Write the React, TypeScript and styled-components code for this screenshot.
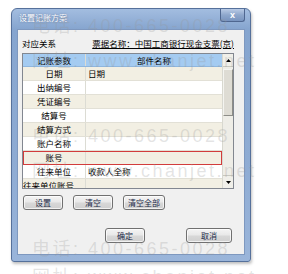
import React from "react";
import styled, { createGlobalStyle } from "styled-components";

const GlobalStyle = createGlobalStyle`
  html, body {
    margin: 0;
    padding: 0;
    background: #ffffff;
  }
  body {
    font-family: "Noto Sans CJK SC", "Liberation Sans", sans-serif;
    color: #000;
  }
`;

const Page = styled.div`
  position: relative;
  width: 288px;
  height: 274px;
  overflow: hidden;
  box-sizing: border-box;
  padding: 8px 0 0 11px;
`;

const Dialog = styled.div`
  width: 240px;
  height: 254px;
  box-sizing: border-box;
  display: flex;
  flex-direction: column;
  border: 1px solid #56719b;
  border-radius: 6px 6px 3px 3px;
  background: linear-gradient(180deg, #a3bde0 0%, #86a5cf 8%, #8eabd3 60%, #9ab5da 100%);
  padding: 0 5px 6px 5px;
  box-shadow: 1px 2px 3px rgba(0, 0, 0, 0.25);
`;

const TitleBar = styled.div`
  height: 20px;
  display: flex;
  justify-content: space-between;
  align-items: flex-start;
`;

const Title = styled.span`
  color: #ffffff;
  font-size: 8px;
  line-height: 10px;
  padding: 4px 0 0 2px;
  text-shadow: 0 0 2px rgba(40, 60, 100, 0.6);
`;

const CloseButton = styled.div`
  width: 25px;
  height: 13px;
  box-sizing: border-box;
  border: 1px solid #4f6790;
  border-top: none;
  border-radius: 0 0 3px 3px;
  background: linear-gradient(180deg, #b9cbe6 0%, #8ea7cc 50%, #7894bf 100%);
  display: flex;
  align-items: center;
  justify-content: center;
  color: #ffffff;
  font-family: "Liberation Sans", sans-serif;
  font-weight: bold;
  font-size: 9px;
  line-height: 9px;
`;

const Panel = styled.div`
  flex: 1;
  box-sizing: border-box;
  background: #f0f0f0;
  border: 1px solid #7e98bf;
  display: flex;
  flex-direction: column;
  padding: 8px 10px 0 4px;
`;

const InfoRow = styled.div`
  display: flex;
  justify-content: space-between;
  font-size: 8.5px;
  line-height: 11px;
  height: 12px;
`;

const InfoText = styled.span<{ $underline?: boolean }>`
  text-decoration: ${(p) => (p.$underline ? "underline" : "none")};
  text-underline-offset: 1px;
`;

const Table = styled.div`
  margin-top: 3px;
  width: 212px;
  height: 136px;
  box-sizing: border-box;
  border: 1px solid #828790;
  display: flex;
  background: #ffffff;
`;

const Grid = styled.div`
  flex: 1;
  overflow: hidden;
  display: flex;
  flex-direction: column;
`;

const Row = styled.div<{ $tone: "head" | "odd" | "even"; $marked?: boolean }>`
  flex: none;
  display: grid;
  grid-template-columns: 63px 1fr;
  height: ${(p) => (p.$tone === "head" ? "13px" : "14px")};
  box-sizing: border-box;
  font-size: 8.5px;
  line-height: 12px;
  background: ${(p) =>
    p.$tone === "head" ? "#a4cbf1" : p.$tone === "odd" ? "#f2efe3" : "#ffffff"};
  border-bottom: 1px solid ${(p) => (p.$tone === "head" ? "#8fb6de" : "#e2e0d6")};
  outline: ${(p) => (p.$marked ? "1px solid #d23c3c" : "none")};
  outline-offset: -1px;
`;

const Cell = styled.div<{ $align: "center" | "left" | "start" }>`
  text-align: ${(p) => (p.$align === "center" ? "center" : "left")};
  padding-left: ${(p) => (p.$align === "left" ? "2px" : "0")};
  white-space: nowrap;
  overflow: visible;
  border-right: 1px solid #dcdcd4;
  &:last-child {
    border-right: none;
  }
`;

const Scrollbar = styled.div`
  width: 10px;
  display: flex;
  flex-direction: column;
  background: #eeede7;
  border-left: 1px solid #d8d8d0;
`;

const ArrowButton = styled.div`
  height: 12px;
  display: flex;
  align-items: center;
  justify-content: center;
  background: #f0efe9;
  border-bottom: 1px solid #c8c8c0;
  &:last-child {
    border-bottom: none;
    border-top: 1px solid #c8c8c0;
    margin-top: auto;
  }
`;

const Thumb = styled.div`
  margin-top: 2px;
  height: 47px;
  box-sizing: border-box;
  background: #dedcd4;
  border: 1px solid #8d8d88;
  border-left-color: #f4f4f0;
  border-top-color: #f4f4f0;
`;

const ButtonRow = styled.div<{ $end?: boolean }>`
  display: flex;
  justify-content: ${(p) => (p.$end ? "flex-end" : "flex-start")};
  gap: ${(p) => (p.$end ? "41px" : "10px")};
  margin-top: ${(p) => (p.$end ? "18px" : "6px")};
  padding-left: ${(p) => (p.$end ? "0" : "1px")};
  padding-right: ${(p) => (p.$end ? "2px" : "0")};
`;

const Button = styled.div<{ $w: number }>`
  width: ${(p) => p.$w}px;
  height: 15px;
  box-sizing: border-box;
  border: 1px solid #707070;
  border-radius: 3px;
  background: linear-gradient(180deg, #f4f4f4 0%, #e8e8e8 48%, #d8d8d8 52%, #cfcfcf 100%);
  box-shadow: inset 0 0 0 1px rgba(255, 255, 255, 0.7);
  display: flex;
  align-items: center;
  justify-content: center;
  font-size: 8px;
  line-height: 10px;
  color: #1d2a48;
`;

const Watermarks = styled.div`
  position: absolute;
  inset: 0;
  pointer-events: none;
`;

const Mark = styled.div`
  position: absolute;
  left: 32px;
  white-space: nowrap;
  font-family: "Liberation Sans", "Noto Sans CJK SC", sans-serif;
  font-size: 18px;
  line-height: 18px;
  letter-spacing: 2.5px;
  color: rgba(150, 150, 150, 0.26);
`;

const rows: { param: string; part: string; marked?: boolean; wide?: boolean }[] = [
  { param: "日期", part: "日期" },
  { param: "出纳编号", part: "" },
  { param: "凭证编号", part: "" },
  { param: "结算号", part: "" },
  { param: "结算方式", part: "" },
  { param: "账户名称", part: "" },
  { param: "账号", part: "", marked: true },
  { param: "往来单位", part: "收款人全称" },
  { param: "往来单位账号", part: "", wide: true },
];

const marks: { text: string; top: number }[] = [
  { text: "电话: 400-665-0028", top: 17 },
  { text: "网址: www.chanjet.net", top: 52 },
  { text: "电话: 400-665-0028", top: 127 },
  { text: "网址: www.chanjet.net", top: 162 },
  { text: "电话: 400-665-0028", top: 240 },
  { text: "网址: www.chanjet.net", top: 268 },
];

const UpArrow = () => (
  <svg width="5" height="3" viewBox="0 0 5 3">
    <path d="M0 3 L2.5 0 L5 3 Z" fill="#000" />
  </svg>
);

const DownArrow = () => (
  <svg width="5" height="3" viewBox="0 0 5 3">
    <path d="M0 0 L2.5 3 L5 0 Z" fill="#000" />
  </svg>
);

export default function App() {
  return (
    <>
      <GlobalStyle />
      <Page>
        <Dialog>
          <TitleBar>
            <Title>设置记账方案</Title>
            <CloseButton>x</CloseButton>
          </TitleBar>
          <Panel>
            <InfoRow>
              <InfoText>对应关系</InfoText>
              <InfoText $underline>票据名称：中国工商银行现金支票(京)</InfoText>
            </InfoRow>
            <Table>
              <Grid>
                <Row $tone="head">
                  <Cell $align="center">记账参数</Cell>
                  <Cell $align="center">部件名称</Cell>
                </Row>
                {rows.map((r, i) => (
                  <Row key={r.param} $tone={i % 2 === 0 ? "odd" : "even"} $marked={r.marked}>
                    <Cell $align={r.wide ? "start" : "center"}>{r.param}</Cell>
                    <Cell $align="left">{r.part}</Cell>
                  </Row>
                ))}
              </Grid>
              <Scrollbar>
                <ArrowButton>
                  <UpArrow />
                </ArrowButton>
                <Thumb />
                <ArrowButton>
                  <DownArrow />
                </ArrowButton>
              </Scrollbar>
            </Table>
            <ButtonRow>
              <Button $w={40}>设置</Button>
              <Button $w={40}>清空</Button>
              <Button $w={42}>清空全部</Button>
            </ButtonRow>
            <ButtonRow $end>
              <Button $w={40}>确定</Button>
              <Button $w={46}>取消</Button>
            </ButtonRow>
          </Panel>
        </Dialog>
        <Watermarks>
          {marks.map((m, i) => (
            <Mark key={i} style={{ top: m.top }}>
              {m.text}
            </Mark>
          ))}
        </Watermarks>
      </Page>
    </>
  );
}
